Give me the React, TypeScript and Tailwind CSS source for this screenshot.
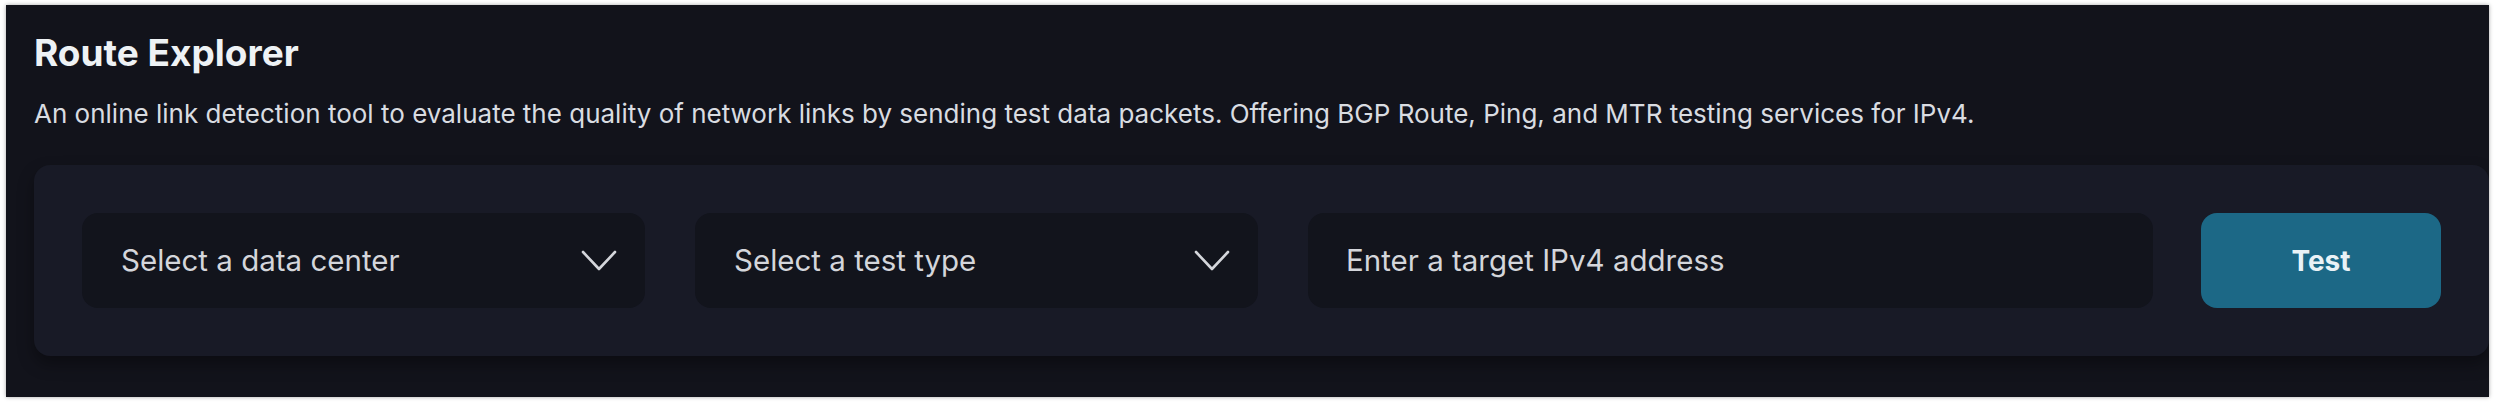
function Chevron() {
  return (
    <svg width="36" height="24" viewBox="0 0 36 24" fill="none" className="text-[#d4d6db]">
      <polyline points="2,3 18,20 34,3" stroke="currentColor" strokeWidth="2.6" strokeLinecap="round" strokeLinejoin="round" />
    </svg>
  );
}

function SelectBox({ label }: { label: string }) {
  return (
    <button className="w-[563px] shrink-0 h-[95px] rounded-[16px] bg-[#12141c] flex items-center justify-between pl-[39px] pr-[28px] text-left">
      <span className="text-[29.5px] text-[#d4d6db]">{label}</span>
      <Chevron />
    </button>
  );
}

export default function App() {
  return (
    <div
      className="w-[2496px] h-[404px] bg-white pt-[5px] pl-[6px] pr-[7px] pb-[7px]"
      style={{ fontFamily: 'Inter, "Noto Sans", sans-serif' }}
    >
      <div className="h-full bg-[#12131b] pl-[28px] pt-[28px] overflow-hidden shadow-[0_0_4px_rgba(0,0,0,0.35)]">
        <h1 className="text-[37px] leading-[40px] font-bold text-[#eef2f5]">Route Explorer</h1>
        <p className="mt-[25px] text-[26px] leading-[32px] text-[#d9dce1] whitespace-nowrap">
          An online link detection tool to evaluate the quality of network links by sending test data packets. Offering BGP Route, Ping, and MTR testing services for IPv4.
        </p>
        <div className="mt-[35px] rounded-[16px] bg-[#181a26] p-12 flex items-center shadow-[0_8px_16px_rgba(0,0,0,0.35)]">
          <div className="flex gap-[50px]">
            <SelectBox label="Select a data center" />
            <SelectBox label="Select a test type" />
            <div className="w-[845px] shrink-0 h-[95px] rounded-[16px] bg-[#12141c] flex items-center pl-[38px]">
              <span className="text-[29.5px] text-[#d4d6db]">Enter a target IPv4 address</span>
            </div>
          </div>
          <button className="ml-12 w-[240px] shrink-0 h-[95px] rounded-[16px] bg-[#1c6886] text-[28px] font-bold text-[#eaf2f6]">
            Test
          </button>
        </div>
      </div>
    </div>
  );
}
